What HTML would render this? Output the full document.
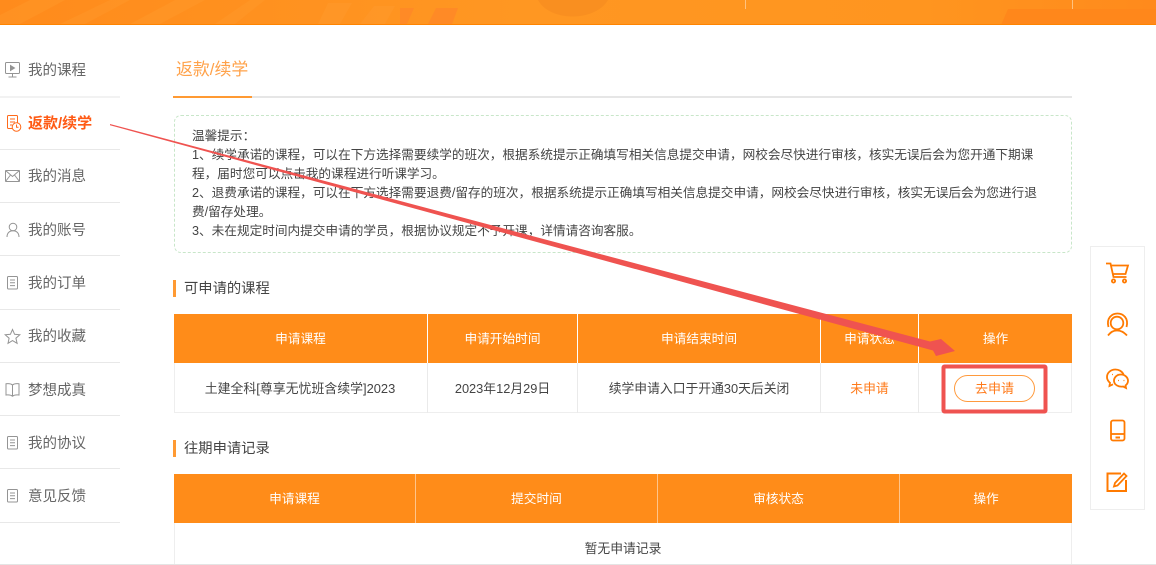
<!DOCTYPE html>
<html lang="zh">
<head>
<meta charset="utf-8">
<title>返款/续学</title>
<style>
*{box-sizing:border-box;margin:0;padding:0}
html,body{width:1156px;height:565px;overflow:hidden;background:#fff}
body{position:relative;font-family:"Liberation Sans","Noto Sans CJK SC",sans-serif;color:#333}
.a{position:absolute;white-space:nowrap}
.top{left:0;top:0;width:1156px;height:25px}
.line{left:0;width:120px;height:1px;background:#e8e8e8}
.nav{left:28px;font-size:14.5px;line-height:20px;color:#666}
.ic{position:absolute;left:0;width:24px;height:24px;fill:none;stroke:#949494;stroke-width:1}
.notice{left:174px;top:115px;width:898px;height:138px;border:1px dashed #c8e6c9;border-radius:7px}
.nt{left:192px;font-size:12.65px;line-height:19px;color:#444}
.sec{left:173px;width:3px;height:17px;background:#ff9a33}
.st{left:184px;font-size:14.3px;line-height:20px;color:#444}
.th{background:#ff8c19;color:#fff;font-size:12.7px;text-align:center;height:49px;line-height:51px}
.td{font-size:12.8px;text-align:center;height:49px;line-height:51px;color:#444;background:#fff}
.v{width:1px;background:#eaeaea}
</style>
</head>
<body>
<svg class="a top" viewBox="0 0 1156 25" preserveAspectRatio="none">
<defs><linearGradient id="g" x1="0" x2="1" y1="0" y2="0">
<stop offset="0" stop-color="#ff8b1c"/><stop offset=".45" stop-color="#ff9722"/><stop offset=".8" stop-color="#ff951f"/><stop offset="1" stop-color="#ff8a1c"/></linearGradient></defs>
<rect width="1156" height="25" fill="url(#g)"/>
<path d="M0 15 L30 0 H65 L20 24 H0Z M60 24 L110 0 H130 L85 24Z M130 24 L175 0 H205 L160 24Z M215 24 L250 0 H265 L235 24Z" fill="#ff9a2c" opacity=".4"/>
<path d="M318 24 L328 3 H352 L340 24Z M360 24 L374 6 H395 L385 24Z" fill="#ff9a2c" opacity=".5"/>
<path d="M400 24 V8 H414 L407 24Z M428 24 L436 8 H458 L452 24Z" fill="#ff8a26"/>
<path d="M538 0 C550 22 595 22 608 0Z" fill="#f98f20"/>
<path d="M1001 25 L1008 9 H1156 V25Z" fill="#ff871b"/>
<rect x="745" y="0" width="1" height="9" fill="#ffc27f"/>
<rect x="1072" y="0" width="1" height="9" fill="#ffc27f"/>
<rect y="24" width="1156" height="1" fill="#ff8400"/>
</svg>

<div class="a line" style="top:96px;height:2px;background:#f2f2f2"></div>
<div class="a line" style="top:149px"></div>
<div class="a line" style="top:202px"></div>
<div class="a line" style="top:255px"></div>
<div class="a line" style="top:309px"></div>
<div class="a line" style="top:362px"></div>
<div class="a line" style="top:415px"></div>
<div class="a line" style="top:468px"></div>
<div class="a line" style="top:522px"></div>

<svg class="ic" style="top:58px" viewBox="0 0 24 24"><rect x="5.500" y="4.500" width="14" height="11" rx="1"/><path d="M10.500 7.500v5l4-2.500z" fill="#949494"/><path d="M12.500 15.500v3.500M8.500 19h8"/></svg>
<div class="a nav" style="top:61px">我的课程</div>

<svg class="ic" style="top:111px;stroke:#ff6a1a" viewBox="0 0 24 24"><path d="M12 17.500H8.500a1 1 0 0 1-1-1V5.500a1 1 0 0 1 1-1h8a1 1 0 0 1 1 1v6M10 8h5M10 11h5M10 14h2"/><circle cx="16.500" cy="16" r="4.300"/><path d="M16.500 13.500v2.700h2"/></svg>
<div class="a nav" style="top:114px;color:#ff5a14;font-weight:bold;font-size:15px">返款/续学</div>

<svg class="ic" style="top:164px" viewBox="0 0 24 24"><rect x="5.500" y="6.500" width="14" height="11" rx=".5"/><path d="M5.500 6.500l7 6 7-6M5.500 17.500l5-6.500M19.500 17.500l-5-6.500"/></svg>
<div class="a nav" style="top:167px">我的消息</div>

<svg class="ic" style="top:217px" viewBox="0 0 24 24"><circle cx="13" cy="10" r="3.800"/><path d="M7 20c0-4 2.500-6.200 6-6.200s6 2.200 6 6.200"/></svg>
<div class="a nav" style="top:221px">我的账号</div>

<svg class="ic" style="top:270px" viewBox="0 0 24 24"><rect x="7.500" y="6.500" width="10" height="12.500" rx="1"/><path d="M10 10h5M10 12.800h5M10 15.600h5"/></svg>
<div class="a nav" style="top:274px">我的订单</div>

<svg class="ic" style="top:324px" viewBox="0 0 24 24"><path d="M12.500 5.500l2.100 4.800 5.200.5-3.900 3.400 1.200 5.100-4.600-2.700-4.500 2.700 1.100-5.100-3.900-3.400 5.200-.5z"/></svg>
<div class="a nav" style="top:327px">我的收藏</div>

<svg class="ic" style="top:378px" viewBox="0 0 24 24"><path d="M12.500 7c-1.500-1.200-4-1.500-6.500-1.200V17c2.500-.3 5 0 6.500 1.200 1.500-1.200 4-1.500 6.500-1.200V5.800c-2.500-.3-5 0-6.500 1.200zM12.500 7v11"/></svg>
<div class="a nav" style="top:381px">梦想成真</div>

<svg class="ic" style="top:430px" viewBox="0 0 24 24"><rect x="7.500" y="6.500" width="10" height="12.500" rx="1"/><path d="M10 10h5M10 12.800h5M10 15.600h5"/></svg>
<div class="a nav" style="top:434px">我的协议</div>

<svg class="ic" style="top:483px" viewBox="0 0 24 24"><rect x="7.500" y="6.500" width="10" height="12.500" rx="1"/><path d="M10 10h5M10 12.800h5M10 15.600h5"/></svg>
<div class="a nav" style="top:487px">意见反馈</div>

<div class="a" style="left:176px;top:59px;font-size:16.9px;line-height:22px;color:#ffa24a">返款/续学</div>
<div class="a" style="left:173px;top:96px;width:899px;height:2px;background:#e6e6e6"></div>
<div class="a" style="left:173px;top:96px;width:79px;height:2px;background:#ff9a33"></div>

<div class="a notice"></div>
<div class="a nt" style="top:127px">温馨提示：</div>
<div class="a nt" style="top:146px">1、续学承诺的课程，可以在下方选择需要续学的班次，根据系统提示正确填写相关信息提交申请，网校会尽快进行审核，核实无误后会为您开通下期课</div>
<div class="a nt" style="top:165px">程，届时您可以点击我的课程进行听课学习。</div>
<div class="a nt" style="top:184px">2、退费承诺的课程，可以在下方选择需要退费/留存的班次，根据系统提示正确填写相关信息提交申请，网校会尽快进行审核，核实无误后会为您进行退</div>
<div class="a nt" style="top:203px">费/留存处理。</div>
<div class="a nt" style="top:222px">3、未在规定时间内提交申请的学员，根据协议规定不予开课，详情请咨询客服。</div>

<div class="a sec" style="top:280px"></div>
<div class="a st" style="top:279px">可申请的课程</div>

<div class="a" style="left:174px;top:314px;width:898px;height:99px;background:#fff;border-bottom:1px solid #eee;border-left:1px solid #eee;border-right:1px solid #eee"></div>
<div class="a th" style="left:174px;top:314px;width:253px">申请课程</div>
<div class="a th" style="left:428px;top:314px;width:149px">申请开始时间</div>
<div class="a th" style="left:578px;top:314px;width:242px">申请结束时间</div>
<div class="a th" style="left:821px;top:314px;width:97px">申请状态</div>
<div class="a th" style="left:919px;top:314px;width:153px">操作</div>
<div class="a td" style="left:175px;top:363px;width:250px;font-size:12.9px">土建全科[尊享无忧班含续学]2023</div>
<div class="a td" style="left:428px;top:363px;width:149px">2023年12月29日</div>
<div class="a td" style="left:578px;top:363px;width:242px">续学申请入口于开通30天后关闭</div>
<div class="a td" style="left:821px;top:363px;width:97px;color:#ff7a1a">未申请</div>
<div class="a v" style="left:427px;top:363px;height:50px"></div>
<div class="a v" style="left:577px;top:363px;height:50px"></div>
<div class="a v" style="left:820px;top:363px;height:50px"></div>
<div class="a v" style="left:918px;top:363px;height:50px"></div>
<div class="a" style="left:954px;top:375px;width:81px;height:27px;border:1px solid #ff9a3d;border-radius:14px;text-align:center;line-height:25px;font-size:13px;color:#ff7a1a">去申请</div>

<div class="a sec" style="top:440px"></div>
<div class="a st" style="top:439px">往期申请记录</div>

<div class="a" style="left:174px;top:474px;width:898px;height:91px;border-left:1px solid #eee;border-right:1px solid #eee"></div>
<div class="a th" style="left:174px;top:474px;width:241px">申请课程</div>
<div class="a th" style="left:416px;top:474px;width:241px">提交时间</div>
<div class="a th" style="left:658px;top:474px;width:241px">审核状态</div>
<div class="a th" style="left:900px;top:474px;width:172px">操作</div>
<div class="a v" style="left:415px;top:474px;height:49px;background:#ffc48a"></div>
<div class="a v" style="left:657px;top:474px;height:49px;background:#ffc48a"></div>
<div class="a v" style="left:899px;top:474px;height:49px;background:#ffc48a"></div>
<div class="a td" style="left:175px;top:523px;width:896px;height:41px;line-height:51px">暂无申请记录</div>
<div class="a" style="left:0;top:564px;width:1156px;height:1px;background:#e4e4e4"></div>

<div class="a" style="left:1090px;top:246px;width:55px;height:264px;background:#fff;border:1px solid #eee"></div>
<svg class="a" style="left:1090px;top:246px;width:55px;height:264px;fill:none;stroke:#ff7a00;stroke-width:1.8" viewBox="0 0 55 264">
<path d="M16 17.500h4.500l3 13.500h13M21 19.500h17l-2.500 8.500H23"/><circle cx="23.500" cy="35" r="1.600"/><circle cx="34.500" cy="35" r="1.600"/>
<path d="M18.500 81C16 72 22 67.500 27.500 67.500S39 72 36.500 81"/><circle cx="27" cy="77" r="6.300"/><path d="M18 89.500c3-3.500 5-5 9-5s6.500 1.500 10 5"/>
<path d="M33.500 128.500C32 125 28.500 123.500 25.500 123.500 20.500 123.500 17 127 17 131 17 133.500 18.500 135.500 20 136.800L19.500 140 23 138.300"/><path d="M31 128.500c4 0 7 3 7 6.300 0 2-1 3.500-2.500 4.700l.5 2.500-3-1.500c-4 .7-9-1.500-9-5.700 0-3.500 3-6.300 7-6.300z"/><path d="M22 128.500h.9M27.500 128.500h.9M28 134.500h.9M33.500 134.500h.9" stroke-width="1.300"/>
<rect x="21" y="174.500" width="13.500" height="20" rx="2"/><path d="M21 188h13.500"/><path d="M25.500 191.500h4.500" stroke-width="2"/>
<path d="M36 234v11H17.500V227.500H31" stroke-width="2"/><path d="M24 240.500l1-3.500 9-9.500 2.500 2.500-9 9.500z" stroke-width="1.800"/>
</svg>

<svg class="a" style="left:0;top:0;width:1156px;height:565px;pointer-events:none" viewBox="0 0 1156 565">
<path d="M110 124 L930 341.500 L941 339 L955 351 L936 356 L933 350.500 L110 125.200Z" fill="#ef5350"/>
<rect x="943.500" y="366.500" width="102" height="45" rx="1" fill="none" stroke="#ef5350" stroke-width="4"/>
</svg>
</body>
</html>
